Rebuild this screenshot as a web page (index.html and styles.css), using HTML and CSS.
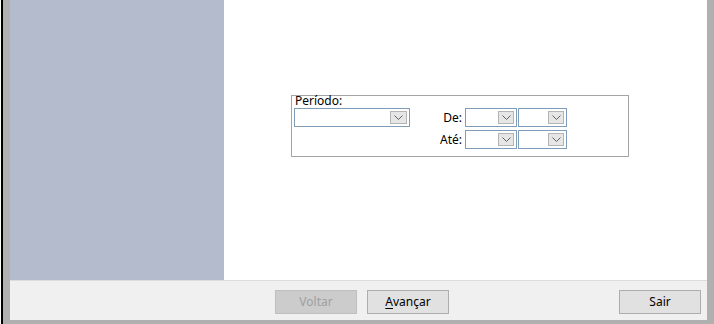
FILE: index.html
```html
<!DOCTYPE html>
<html lang="pt">
<head>
<meta charset="utf-8">
<title>Período</title>
<link rel="stylesheet" href="styles.css">
</head>
<body>
<div class="frame">
  <div class="window">
    <div class="main">
      <div class="sidebar"></div>
      <div class="content">
        <div class="groupbox">
          <div class="group-label">Período:</div>
          <div class="combo combo-period"><span class="drop"><svg width="9" height="5" viewBox="0 0 9 5"><path d="M0.5 0.5 L4.5 4.5 L8.5 0.5" fill="none" stroke="#606060" stroke-width="1"/></svg></span></div>
          <div class="field-label lbl-de">De:</div>
          <div class="combo c-de1"><span class="drop"><svg width="9" height="5" viewBox="0 0 9 5"><path d="M0.5 0.5 L4.5 4.5 L8.5 0.5" fill="none" stroke="#606060" stroke-width="1"/></svg></span></div>
          <div class="combo c-de2"><span class="drop"><svg width="9" height="5" viewBox="0 0 9 5"><path d="M0.5 0.5 L4.5 4.5 L8.5 0.5" fill="none" stroke="#606060" stroke-width="1"/></svg></span></div>
          <div class="field-label lbl-ate">Até:</div>
          <div class="combo c-ate1"><span class="drop"><svg width="9" height="5" viewBox="0 0 9 5"><path d="M0.5 0.5 L4.5 4.5 L8.5 0.5" fill="none" stroke="#606060" stroke-width="1"/></svg></span></div>
          <div class="combo c-ate2"><span class="drop"><svg width="9" height="5" viewBox="0 0 9 5"><path d="M0.5 0.5 L4.5 4.5 L8.5 0.5" fill="none" stroke="#606060" stroke-width="1"/></svg></span></div>
        </div>
      </div>
    </div>
    <div class="buttons">
      <button class="btn btn-disabled" disabled>Voltar</button>
      <button class="btn btn-next"><u>A</u>vançar</button>
      <button class="btn btn-exit">Sair</button>
    </div>
  </div>
</div>
</body>
</html>
```

FILE: styles.css
```css
* { box-sizing: border-box; }

html, body {
  margin: 0;
  padding: 0;
  background: #ffffff;
  width: 714px;
  height: 324px;
  overflow: hidden;
  font-family: "Noto Sans", "Open Sans", sans-serif;
  font-size: 12px;
  color: #000;
}

body { padding-left: 1px; }

.frame {
  height: 324px;
  border-left: 2px solid #000;
  background: #b0b0b0;
  padding: 0 7px 4px 7px;
}

.window {
  height: 320px;
  display: flex;
  flex-direction: column;
}

.main {
  height: 280px;
  display: flex;
}

.sidebar {
  width: 214px;
  background: #b4bbcc;
}

.content {
  flex: 1;
  background: #ffffff;
  padding: 95px 0 0 67px;
}

.groupbox {
  width: 338px;
  height: 62px;
  border: 1px solid #a5a5a5;
  display: grid;
  grid-template-columns: 2px 116px 1fr auto 52px 1px 49px 61px;
  grid-template-rows: 12px 19px 3px 19px;
  align-items: center;
}

.group-label {
  grid-column: 2 / 4;
  grid-row: 1;
  line-height: 12px;
  padding-left: 1px;
  align-self: start;
  margin-top: -1px;
}

.combo {
  height: 19px;
  border: 1px solid #7f9db9;
  background: #fff;
  display: flex;
  justify-content: flex-end;
  padding: 2px;
}

.drop {
  width: 16px;
  height: 100%;
  background: #e6e6e6;
  border: 1px solid #b4b4b4;
  display: flex;
  align-items: center;
  justify-content: center;
}

.combo-period { grid-column: 2; grid-row: 2; }
.combo-period .drop { width: 17px; }

.field-label {
  text-align: right;
  padding-right: 3px;
  line-height: 14px;
}

.lbl-de { grid-column: 4; grid-row: 2; }
.lbl-ate { grid-column: 4; grid-row: 4; }
.c-de1 { grid-column: 5; grid-row: 2; }
.c-de2 { grid-column: 7; grid-row: 2; }
.c-ate1 { grid-column: 5; grid-row: 4; }
.c-ate2 { grid-column: 7; grid-row: 4; }

.buttons {
  height: 40px;
  background: #f0f0f0;
  border-top: 1px solid #dcdcdc;
  display: flex;
  align-items: flex-start;
  padding: 9px 6px 0 265px;
  gap: 10px;
}

.btn {
  width: 82px;
  height: 24px;
  font-family: "Noto Sans", "Open Sans", sans-serif;
  font-size: 12px;
  line-height: 20px;
  padding: 0;
  margin: 0;
  border: 1px solid #adadad;
  background: #e1e1e1;
  color: #000;
}

.btn u { text-decoration: underline; text-underline-offset: 2px; }

.btn-disabled {
  background: #cccccc;
  border-color: #bfbfbf;
  color: #a0a0a0;
}

.btn-exit { margin-left: auto; }
```
